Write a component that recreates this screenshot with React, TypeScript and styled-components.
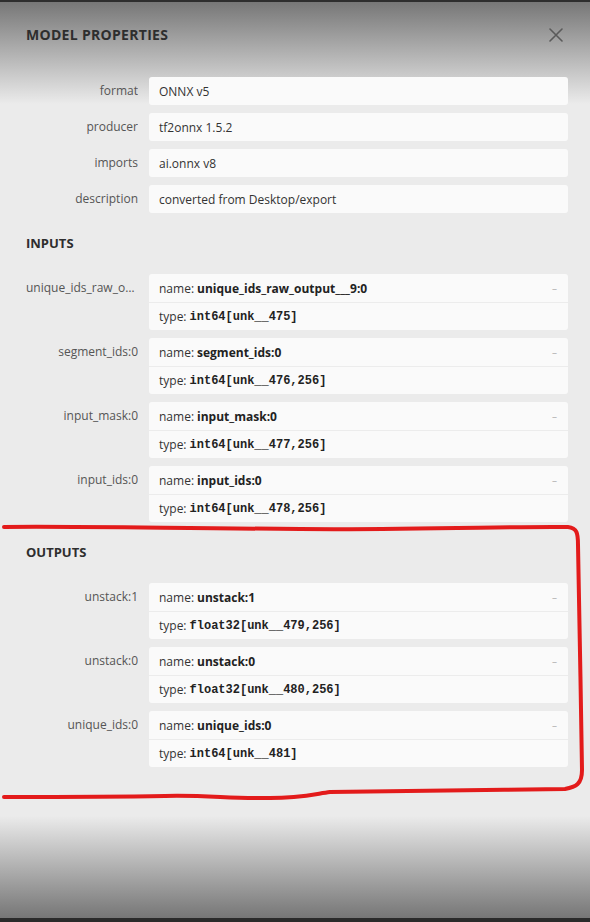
import React from "react";
import styled, { createGlobalStyle } from "styled-components";

const Global = createGlobalStyle`
  html, body { margin: 0; padding: 0; }
  body { font-family: "Open Sans", "Noto Sans", sans-serif; }
`;

const Page = styled.div`
  position: relative;
  width: 590px;
  height: 922px;
  box-sizing: border-box;
  overflow: hidden;
  padding: 0 22px 0 26px;
  background: linear-gradient(
    to bottom,
    #2e2e2e 0px,
    #2e2e2e 2px,
    #777777 2px,
    #ebebeb 104px,
    #ebebeb 816px,
    #767676 918px,
    #2a2a2a 918px,
    #2a2a2a 922px
  );
  font-size: 12px;
  color: #333;
`;

const Header = styled.div`
  display: flex;
  align-items: center;
  justify-content: space-between;
  padding-top: 26px;
  margin-bottom: 33px;
  height: 18px;
`;

const Title = styled.div`
  font-weight: 700;
  font-size: 14px;
  line-height: 18px;
  color: #2e2e2e;
  letter-spacing: 0.3px;
`;

const Close = styled.button`
  border: 0;
  background: none;
  padding: 0;
  margin-right: 4px;
  width: 16px;
  height: 16px;
  display: flex;
  align-items: center;
  justify-content: center;
`;

const Grid = styled.div`
  display: grid;
  grid-template-columns: 112px 1fr;
  column-gap: 11px;
  row-gap: 8px;
`;

const Label = styled.div`
  text-align: right;
  line-height: 28px;
  color: #555;
  white-space: nowrap;
  overflow: hidden;
  text-overflow: ellipsis;
`;

const Box = styled.div`
  background: #fafafa;
  border-radius: 3px;
  overflow: hidden;
`;

const Line = styled.div<{ $sep?: boolean }>`
  height: 28px;
  box-sizing: border-box;
  display: flex;
  align-items: center;
  padding: 0 10px;
  border-top: ${(p) => (p.$sep ? "1px solid #ececec" : "0")};
  color: #333;
`;

const Name = styled.b`
  font-weight: 700;
  color: #222;
  margin-left: 3px;
`;

const Code = styled.code`
  font-family: "Liberation Mono", "DejaVu Sans Mono", monospace;
  font-weight: 700;
  font-size: 12px;
  color: #222;
  margin-left: 3px;
`;

const Toggle = styled.span`
  margin-left: auto;
  margin-right: 1px;
  color: #b5b5b5;
  font-size: 10px;
`;

const Section = styled.div`
  font-weight: 700;
  font-size: 13px;
  line-height: 18px;
  color: #2e2e2e;
  padding: 21px 0 22px;
`;

const Overlay = styled.svg`
  position: absolute;
  left: 0;
  top: 0;
  pointer-events: none;
`;

const props = [
  ["format", "ONNX v5"],
  ["producer", "tf2onnx 1.5.2"],
  ["imports", "ai.onnx v8"],
  ["description", "converted from Desktop/export"],
];

const inputs = [
  ["unique_ids_raw_output___9:0", "unique_ids_raw_output___9:0", "int64[unk__475]"],
  ["segment_ids:0", "segment_ids:0", "int64[unk__476,256]"],
  ["input_mask:0", "input_mask:0", "int64[unk__477,256]"],
  ["input_ids:0", "input_ids:0", "int64[unk__478,256]"],
];

const outputs = [
  ["unstack:1", "unstack:1", "float32[unk__479,256]"],
  ["unstack:0", "unstack:0", "float32[unk__480,256]"],
  ["unique_ids:0", "unique_ids:0", "int64[unk__481]"],
];

function Args({ items }: { items: string[][] }) {
  return (
    <Grid>
      {items.map(([label, name, type]) => (
        <React.Fragment key={label}>
          <Label>{label}</Label>
          <Box>
            <Line>
              name:<Name>{name}</Name>
              <Toggle>–</Toggle>
            </Line>
            <Line $sep>
              type:<Code>{type}</Code>
            </Line>
          </Box>
        </React.Fragment>
      ))}
    </Grid>
  );
}

export default function App() {
  return (
    <>
      <Global />
      <Page>
        <Header>
          <Title>MODEL PROPERTIES</Title>
          <Close aria-label="close">
            <svg width="14" height="14" viewBox="0 0 14 14">
              <path d="M1 1 L13 13 M13 1 L1 13" stroke="#5a5a5a" strokeWidth="1.6" strokeLinecap="round" />
            </svg>
          </Close>
        </Header>
        <Grid>
          {props.map(([k, v]) => (
            <React.Fragment key={k}>
              <Label>{k}</Label>
              <Box>
                <Line>{v}</Line>
              </Box>
            </React.Fragment>
          ))}
        </Grid>
        <Section>INPUTS</Section>
        <Args items={inputs} />
        <Section>OUTPUTS</Section>
        <Args items={outputs} />
        <Overlay width="590" height="922" viewBox="0 0 590 922">
          <path
            d="M4 527 C 60 526, 160 528, 300 529 C 420 530, 520 526, 568 527 C 577 528, 578 533, 578 545 C 579 600, 581 700, 582 770 C 582 784, 576 787, 565 789 C 480 790, 380 791, 330 792 C 315 794, 300 798, 270 798 C 230 799, 210 795, 165 796 C 110 797, 40 797, 4 797"
            fill="none"
            stroke="#e31b1b"
            strokeWidth="4"
            strokeLinecap="round"
            strokeLinejoin="round"
          />
        </Overlay>
      </Page>
    </>
  );
}
